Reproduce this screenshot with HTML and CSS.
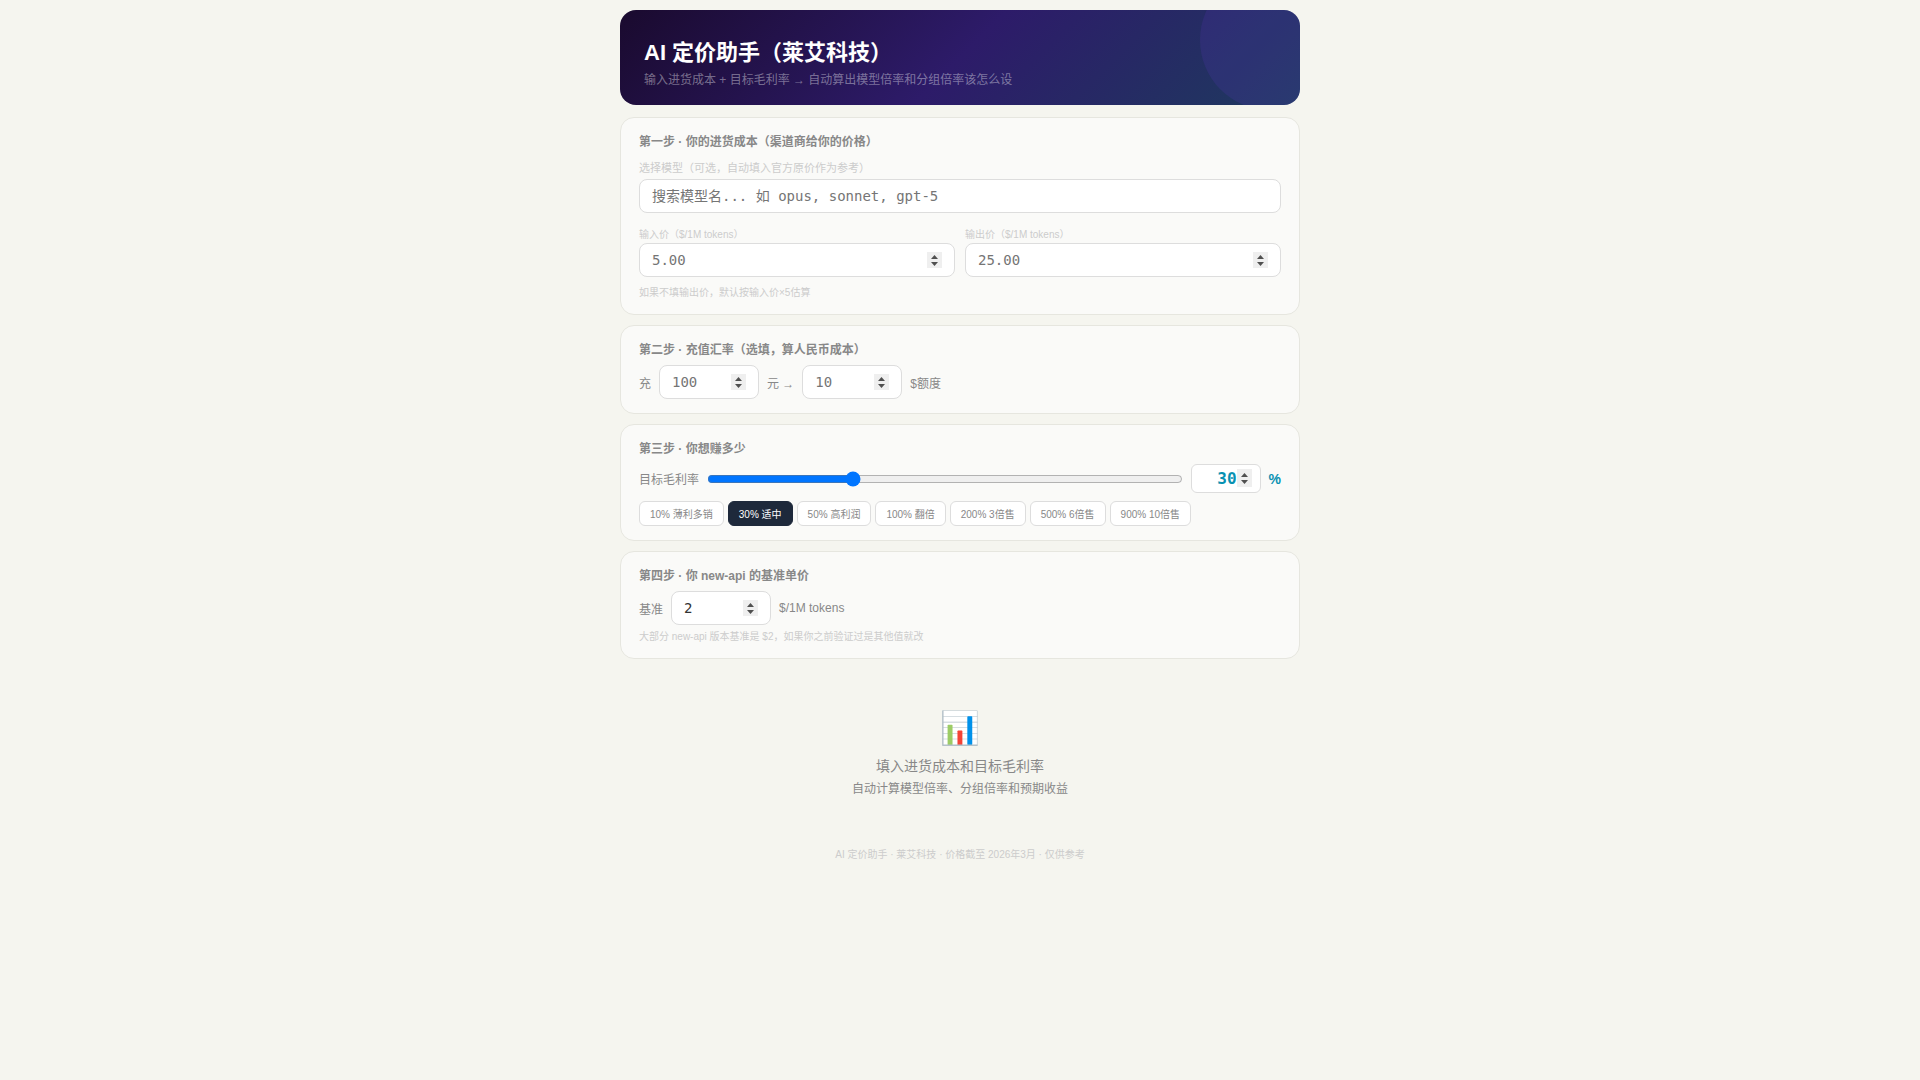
FILE: index.html
```html
<!DOCTYPE html>
<html lang="zh-CN">
<head>
    <meta charset="UTF-8">
    <meta name="viewport" content="width=device-width, initial-scale=1.0">
    <title>AI 定价助手（莱艾科技）</title>
    <link rel="stylesheet" href="styles.css">
</head>
<body>
    <main class="wrap">
        <!-- 页头 -->
        <header class="header">
            <h1>AI 定价助手（莱艾科技）</h1>
            <p>输入进货成本 + 目标毛利率 → 自动算出模型倍率和分组倍率该怎么设</p>
        </header>

        <!-- 第一步 -->
        <section class="card">
            <h2 class="card-title">第一步 · 你的进货成本（渠道商给你的价格）</h2>
            <label class="label label-lg" for="model">选择模型（可选，自动填入官方原价作为参考）</label>
            <input class="input" type="text" id="model" placeholder="搜索模型名... 如 opus, sonnet, gpt-5">
            <div class="cols">
                <div>
                    <label class="label" for="inPrice">输入价（$/1M tokens）</label>
                    <input class="input" type="number" id="inPrice" placeholder="5.00" step="0.01">
                </div>
                <div>
                    <label class="label" for="outPrice">输出价（$/1M tokens）</label>
                    <input class="input" type="number" id="outPrice" placeholder="25.00" step="0.01">
                </div>
            </div>
            <p class="hint hint-cost">如果不填输出价，默认按输入价×5估算</p>
        </section>

        <!-- 第二步 -->
        <section class="card">
            <h2 class="card-title">第二步 · 充值汇率（选填，算人民币成本）</h2>
            <div class="row">
                <label for="rmb">充</label>
                <input class="input input-sm" type="number" id="rmb" placeholder="100">
                <label for="usd">元 →</label>
                <input class="input input-sm" type="number" id="usd" placeholder="10">
                <span>$额度</span>
            </div>
        </section>

        <!-- 第三步 -->
        <section class="card">
            <h2 class="card-title">第三步 · 你想赚多少</h2>
            <div class="row">
                <label for="margin">目标毛利率</label>
                <input class="slider" type="range" id="margin" min="0" max="100" value="30">
                <input class="input input-pct" type="number" id="marginNum" value="30" aria-label="毛利率">
                <span class="pct">%</span>
            </div>
            <div class="presets">
                <button class="preset" type="button" data-v="10">10% 薄利多销</button>
                <button class="preset active" type="button" data-v="30">30% 适中</button>
                <button class="preset" type="button" data-v="50">50% 高利润</button>
                <button class="preset" type="button" data-v="100">100% 翻倍</button>
                <button class="preset" type="button" data-v="200">200% 3倍售</button>
                <button class="preset" type="button" data-v="500">500% 6倍售</button>
                <button class="preset" type="button" data-v="900">900% 10倍售</button>
            </div>
        </section>

        <!-- 第四步 -->
        <section class="card">
            <h2 class="card-title">第四步 · 你 new-api 的基准单价</h2>
            <div class="row">
                <label for="base">基准</label>
                <input class="input input-sm" type="number" id="base" value="2">
                <span>$/1M tokens</span>
            </div>
            <p class="hint">大部分 new-api 版本基准是 $2，如果你之前验证过是其他值就改</p>
        </section>

        <!-- 空状态 -->
        <section class="empty">
            <div class="empty-icon">📊</div>
            <p class="empty-title">填入进货成本和目标毛利率</p>
            <p class="empty-desc">自动计算模型倍率、分组倍率和预期收益</p>
        </section>

        <footer class="footer">AI 定价助手 · 莱艾科技 · 价格截至 2026年3月 · 仅供参考</footer>
    </main>

    <script>
        const slider = document.getElementById('margin');
        const num = document.getElementById('marginNum');
        const presets = document.querySelectorAll('.preset');

        // 同步滑块、数字框和快捷按钮
        function setMargin(v) {
            slider.value = v;
            num.value = v;
            presets.forEach(b => b.classList.toggle('active', b.dataset.v === String(v)));
        }

        slider.addEventListener('input', () => setMargin(slider.value));
        num.addEventListener('change', () => setMargin(num.value));
        presets.forEach(b => b.addEventListener('click', () => setMargin(b.dataset.v)));
    </script>
</body>
</html>
```

FILE: styles.css
```css
* {
    box-sizing: border-box;
    margin: 0;
    padding: 0;
}

body {
    background: #f5f5ef;
    color: #333;
    font-family: "Liberation Sans", "Noto Sans CJK SC", sans-serif;
    font-size: 12px;
    padding: 10px;
}

.wrap {
    max-width: 680px;
    margin: 0 auto;
}

/* 页头 */
.header {
    position: relative;
    overflow: hidden;
    padding: 27px 24px 16px;
    margin-bottom: 12px;
    border-radius: 16px;
    background: linear-gradient(135deg, #1a0a2e 0%, #2d1b69 50%, #1e3a5f 100%);
    color: #fff;
}

/* 右上角的装饰圆 */
.header::after {
    content: "";
    position: absolute;
    top: -40px;
    right: -40px;
    width: 140px;
    height: 140px;
    border-radius: 50%;
    background: rgba(124, 58, 237, 0.12);
}

.header h1 {
    font-size: 22px;
    font-weight: 700;
    line-height: 32px;
    margin-bottom: 3px;
}

.header p {
    font-size: 12px;
    line-height: 17px;
    color: rgba(255, 255, 255, 0.4);
}

/* 卡片 */
.card {
    background: #fafaf8;
    border: 1px solid #e6e6df;
    border-radius: 14px;
    padding: 16px 18px 14px;
    margin-bottom: 10px;
}

.card-title {
    font-size: 12px;
    font-weight: 700;
    line-height: 17px;
    color: #888;
    margin-bottom: 6px;
}

.label {
    display: block;
    font-size: 10px;
    line-height: 16px;
    color: #ccc;
}

.label-lg {
    font-size: 11px;
    line-height: 22px;
}

.hint {
    font-size: 10px;
    line-height: 14px;
    color: #ccc;
    margin-top: 5px;
}

.hint-cost {
    margin-top: 9px;
}

/* 输入框 */
.input {
    display: block;
    width: 100%;
    height: 34px;
    padding: 8px 12px;
    border: 1px solid #ddd;
    border-radius: 8px;
    background: #fff;
    color: #333;
    font-family: "DejaVu Sans Mono", "Noto Sans CJK SC", monospace;
    font-size: 14px;
    outline: none;
}

.input:focus {
    border-color: #0891b2;
}

.input-sm {
    width: 100px;
}

.input-pct {
    width: 70px;
    height: 29px;
    padding: 4px 8px;
    border-radius: 6px;
    color: #0891b2;
    font-size: 16px;
    font-weight: 700;
    text-align: right;
}

/* 始终显示数字框的上下箭头 */
.input::-webkit-inner-spin-button {
    -webkit-appearance: none;
    opacity: 1;
    width: 15px;
    height: 16px;
    background: #efefef url("data:image/svg+xml,%3Csvg xmlns='http://www.w3.org/2000/svg' width='15' height='16' viewBox='0 0 15 16'%3E%3Cpath d='M4 7L7.5 3L11 7ZM4 10L7.5 14L11 10Z' fill='%23505050'/%3E%3C/svg%3E") no-repeat center;
}

.input-pct::-webkit-inner-spin-button {
    height: 18px;
}

.cols {
    display: grid;
    grid-template-columns: 1fr 1fr;
    gap: 10px;
    margin-top: 14px;
}

.row {
    display: flex;
    align-items: center;
    gap: 8px;
    color: #888;
}

.slider {
    flex: 1;
    min-width: 0;
}

.pct {
    font-size: 14px;
    font-weight: 700;
    color: #0891b2;
}

/* 快捷按钮 */
.presets {
    display: flex;
    flex-wrap: wrap;
    gap: 4px;
    margin-top: 8px;
}

.preset {
    padding: 5px 10px 3px;
    border: 1px solid #ddd;
    border-radius: 6px;
    background: #fff;
    color: #888;
    font-family: inherit;
    font-size: 10px;
    line-height: 15px;
    cursor: pointer;
}

.preset.active {
    background: #1e293b;
    border-color: #1e293b;
    color: #fff;
}

/* 空状态 */
.empty {
    padding: 40px 20px;
    text-align: center;
    color: #888;
}

.empty-icon {
    font-size: 32px;
    line-height: 38px;
    margin-bottom: 8px;
}

.empty-title {
    font-size: 14px;
    line-height: 22px;
}

.empty-desc {
    font-size: 12px;
    line-height: 17px;
    margin-top: 4px;
}

.footer {
    padding: 9px 10px;
    text-align: center;
    font-size: 10px;
    line-height: 15px;
    color: #ccc;
}
```
